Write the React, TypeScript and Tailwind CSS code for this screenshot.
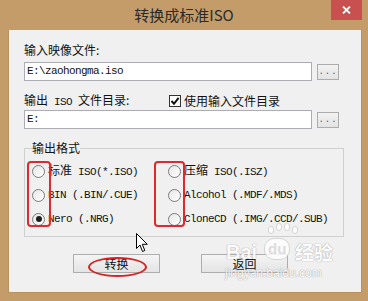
import React from "react";

const sans = { fontFamily: "'Noto Sans CJK SC', 'Liberation Sans', sans-serif" };
const mono = { fontFamily: "'Liberation Mono', 'Noto Sans CJK SC', monospace" };

function Radio({ checked }: { checked?: boolean }) {
  return (
    <span className="w-[13px] h-[13px] rounded-full border border-[#7a7a7a] bg-gradient-to-br from-[#e6e6e6] to-white flex items-center justify-center shrink-0">
      {checked && <span className="w-[6px] h-[6px] rounded-full bg-[#1e1e1e]" />}
    </span>
  );
}

function Opt({ cn, rest, checked }: { cn?: string; rest: string; checked?: boolean }) {
  return (
    <div className="h-[24px] flex items-center">
      <Radio checked={checked} />
      <span className="ml-[3px] flex items-baseline text-[#111] whitespace-pre">
        {cn && <span className="text-[12px] leading-[14px]" style={sans}>{cn}</span>}
        <span className="text-[11px] tracking-[-0.6px] leading-[14px]" style={mono}>{rest}</span>
      </span>
    </div>
  );
}

function Browse() {
  return (
    <div className="ml-[5px] w-[22px] h-[16px] border border-[#acacac] bg-gradient-to-b from-[#f2f2f2] to-[#e3e3e3] flex items-end justify-center">
      <span className="text-[9px] leading-[9px] tracking-[1px] text-[#555] mb-[2px]" style={mono}>...</span>
    </div>
  );
}

export default function App() {
  return (
    <div className="w-[368px] h-[301px] bg-[#c49c69] flex flex-col relative overflow-hidden" style={sans}>
      {/* title bar */}
      <div className="h-[30px] flex items-center justify-center relative">
        <span className="text-[15px] text-[#2a2a2a] leading-none mb-[1px]">转换成标准ISO</span>
        <div className="absolute right-[6px] top-0 w-[31px] h-[20px] bg-[#c8504e] flex items-center justify-center">
          <svg width="9" height="8" viewBox="0 0 9 8">
            <path d="M1 0.5 L8 7.5 M8 0.5 L1 7.5" stroke="#fff" strokeWidth="1.8" />
          </svg>
        </div>
      </div>

      {/* client */}
      <div className="ml-[8px] mr-[6px] h-[263px] bg-[#f0f0f0] border border-[#b8915e] border-t-0 flex flex-col">
        <div className="pl-[15px] flex flex-col">
          <div className="mt-[12px] h-[16px] text-[12px] leading-[16px] text-[#111]">输入映像文件:</div>
          <div className="mt-[4px] h-[19px] flex items-center">
            <div className="w-[288px] h-[19px] bg-white border border-[#abadb3] flex items-center pl-[2px]">
              <span className="text-[11px] tracking-[-0.6px] leading-none text-[#111]" style={mono}>E:\zaohongma.iso</span>
            </div>
            <Browse />
          </div>

          <div className="mt-[12px] h-[16px] flex items-center">
            <div className="w-[145px] flex items-baseline whitespace-pre text-[#111]">
              <span className="text-[12px] leading-[14px]">输出</span>
              <span className="text-[11px] tracking-[-0.6px] leading-[14px]" style={mono}> ISO </span>
              <span className="text-[12px] leading-[14px]">文件目录:</span>
            </div>
            <div className="w-[12px] h-[12px] border border-[#333] bg-white flex items-center justify-center">
              <svg width="10" height="10" viewBox="0 0 10 10">
                <path d="M1.5 5 L4 7.8 L8.6 1.8" stroke="#111" strokeWidth="2" fill="none" />
              </svg>
            </div>
            <span className="ml-[3px] text-[12px] leading-none text-[#111]">使用输入文件目录</span>
          </div>
          <div className="mt-[1px] h-[19px] flex items-center">
            <div className="w-[288px] h-[19px] bg-white border border-[#abadb3] flex items-center pl-[2px]">
              <span className="text-[11px] tracking-[-0.6px] leading-none text-[#111]" style={mono}>E:</span>
            </div>
            <Browse />
          </div>

          <fieldset className="mt-[13px] w-[320px] border border-[#cfcfcf] px-[7px] pt-[5px] pb-[5px]">
            <legend className="text-[12px] leading-[12px] text-[#111]">输出格式</legend>
            <div className="grid grid-cols-[136px_1fr]">
              <Opt cn="标准" rest=" ISO(*.ISO)" />
              <Opt cn="压缩" rest=" ISO(.ISZ)" />
              <Opt rest="BIN (.BIN/.CUE)" />
              <Opt rest="Alcohol (.MDF/.MDS)" />
              <Opt rest="Nero (.NRG)" checked />
              <Opt rest="CloneCD (.IMG/.CCD/.SUB)" />
            </div>
          </fieldset>
        </div>

        <div className="mt-[17px] ml-[64px] flex gap-[41px]">
          <div className="w-[87px] h-[19px] border border-[#adadad] bg-gradient-to-b from-[#f4f4f4] to-[#e4e4e4] flex items-center justify-center text-[12px] leading-none text-[#111]">转换</div>
          <div className="w-[87px] h-[19px] border border-[#adadad] bg-gradient-to-b from-[#f4f4f4] to-[#e4e4e4] flex items-center justify-center text-[12px] leading-none text-[#111]">返回</div>
        </div>
      </div>

      {/* annotations */}
      <div className="absolute left-[27px] top-[161px] w-[24px] h-[66px] border-2 border-[#dd2a2a] rounded-[4px]" />
      <div className="absolute left-[154px] top-[161px] w-[31px] h-[66px] border-2 border-[#dd2a2a] rounded-[4px]" />
      <div className="absolute left-[88px] top-[257px] w-[59px] h-[20px] border-2 border-[#d42424] rounded-[50%]" />

      {/* cursor */}
      <svg className="absolute left-[136px] top-[233px]" width="13" height="20" viewBox="0 0 13 20">
        <path d="M0.5 0.5 L0.5 15.5 L4 12 L6.5 18.5 L8.8 17.5 L6.3 11.3 L11.3 11.3 Z" fill="#fff" stroke="#000" strokeWidth="1" strokeLinejoin="round" />
      </svg>

      {/* watermark */}
      <div className="absolute left-[224px] top-[224px] w-[116px] h-[58px] pointer-events-none opacity-80">
        <div className="absolute left-[44px] top-[2px] flex gap-[2px]">
          <span className="w-[6px] h-[8px] rounded-full bg-white border border-[#cfcfcf]" />
          <span className="w-[6px] h-[8px] rounded-full bg-white border border-[#cfcfcf] mt-[-3px]" />
          <span className="w-[6px] h-[8px] rounded-full bg-white border border-[#cfcfcf] mt-[-3px]" />
          <span className="w-[6px] h-[8px] rounded-full bg-white border border-[#cfcfcf]" />
        </div>
        <div className="absolute left-[2px] top-[18px] text-[20px] leading-none font-bold text-white [text-shadow:0_0_1px_#9a9a9a,0_0_1px_#9a9a9a]" style={{ fontFamily: "'Liberation Sans', sans-serif" }}>
          Bai
        </div>
        <div className="absolute left-[40px] top-[14px] h-[22px] px-[3px] rounded-[10px] bg-white border border-[#cfcfcf] text-[15px] leading-[20px] font-bold text-[#d8d8d8]" style={{ fontFamily: "'Liberation Sans', sans-serif" }}>
          du
        </div>
        <div className="absolute left-[71px] top-[18px] text-[19px] leading-none font-bold text-white [text-shadow:0_0_1px_#9a9a9a,0_0_1px_#9a9a9a]">
          经验
        </div>
        <div className="absolute left-[1px] top-[43px] text-[12px] leading-none text-white [text-shadow:0_0_1px_#9a9a9a,0_0_1px_#9a9a9a]" style={{ fontFamily: "'Liberation Sans', sans-serif" }}>
          jingyan.baidu.com
        </div>
      </div>
    </div>
  );
}
